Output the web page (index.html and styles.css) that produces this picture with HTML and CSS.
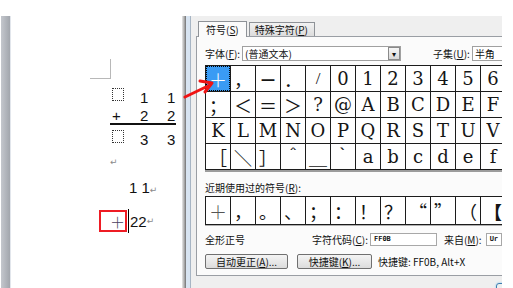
FILE: index.html
```html
<!DOCTYPE html>
<html lang="zh-CN">
<head>
  <meta charset="UTF-8" />
  <title>符号</title>
  <link rel="stylesheet" href="styles.css">
</head>
<body>
  <div class="screen">
    <div class="top-gap"></div>
    <div class="main">
      <div class="gutter"></div>

      <!-- Word page -->
      <div class="page">
        <div class="crop-mark"></div>
        <div class="math">
          <div class="mrow"><span class="mcell"><i class="ph"></i></span><span class="mcell">1</span><span class="mcell">1</span></div>
          <div class="mrow under"><span class="mcell">+</span><span class="mcell">2</span><span class="mcell">2</span></div>
          <div class="mrow last"><span class="mcell"><i class="ph"></i></span><span class="mcell">3</span><span class="mcell">3</span></div>
        </div>
        <div class="para-empty"><span class="pm">↵</span></div>
        <div class="line-11">1 1<span class="pm">↵</span></div>
        <div class="line-plus">
          <span class="red-box">＋</span><span class="caret"></span><span>22</span><span class="pm">↵</span>
        </div>
      </div>
      <div class="page-shadow"></div>
      <div class="frame"></div>

      <!-- Symbol dialog -->
      <div class="dialog">
        <div class="tabs">
          <div class="tab active">符号(<u>S</u>)</div>
          <div class="tab">特殊字符(<u>P</u>)</div>
        </div>
        <div class="panel">
          <div class="font-row">
            <span class="lbl">字体(<u>F</u>):</span>
            <div class="combo"><span>(普通文本)</span><span class="drop">▾</span></div>
            <span class="lbl subset">子集(<u>U</u>):</span>
            <div class="combo small"><span>半角</span></div>
          </div>

          <div class="grid-wrap">
            <div class="sym-grid">
              <div class="cell c hl">＋</div><div class="cell c">，</div><div class="cell c dash">－</div><div class="cell c">．</div><div class="cell thin">/</div><div class="cell">0</div><div class="cell">1</div><div class="cell">2</div><div class="cell">3</div><div class="cell">4</div><div class="cell">5</div><div class="cell">6</div>
              <div class="cell c">；</div><div class="cell c">＜</div><div class="cell c">＝</div><div class="cell c">＞</div><div class="cell">?</div><div class="cell">@</div><div class="cell">A</div><div class="cell">B</div><div class="cell">C</div><div class="cell">D</div><div class="cell">E</div><div class="cell">F</div>
              <div class="cell">K</div><div class="cell">L</div><div class="cell">M</div><div class="cell">N</div><div class="cell">O</div><div class="cell">P</div><div class="cell">Q</div><div class="cell">R</div><div class="cell">S</div><div class="cell">T</div><div class="cell">U</div><div class="cell">V</div>
              <div class="cell c">［</div><div class="cell c">＼</div><div class="cell c">］</div><div class="cell c">＾</div><div class="cell c">＿</div><div class="cell c">｀</div><div class="cell">a</div><div class="cell">b</div><div class="cell">c</div><div class="cell">d</div><div class="cell">e</div><div class="cell">f</div>
            </div>
          </div>

          <div class="recent-label">近期使用过的符号(<u>R</u>):</div>
          <div class="grid-wrap recent-wrap">
            <div class="recent">
              <div class="cell c plus">＋</div><div class="cell c">，</div><div class="cell c">。</div><div class="cell c">、</div><div class="cell c">；</div><div class="cell c">：</div><div class="cell c">！</div><div class="cell c">？</div><div class="cell c">“</div><div class="cell c">”</div><div class="cell c">（</div><div class="cell c bold">【</div>
            </div>
          </div>

          <div class="code-row">
            <span class="glyph-name">全形正号</span>
            <span class="lbl">字符代码(<u>C</u>):</span>
            <div class="field">FF0B</div>
            <span class="lbl from">来自(<u>M</u>):</span>
            <div class="field short">Ur</div>
          </div>

          <div class="btn-row">
            <button class="btn wide">自动更正(<u>A</u>)...</button>
            <button class="btn">快捷键(<u>K</u>)...</button>
            <span class="lbl shortcut">快捷键: FF0B, Alt+X</span>
          </div>
        </div>
        <div class="dialog-foot"><span class="default-btn"></span></div>
      </div>
    </div>

    <!-- red pointer drawn over the screenshot -->
    <svg class="arrow" width="34" height="24" viewBox="0 0 34 24">
      <path d="M2 20 L27 8" stroke="#f01414" stroke-width="3" stroke-linecap="round" fill="none"/>
      <path d="M17 4 L29 6 L22 15" stroke="#f01414" stroke-width="3" stroke-linecap="round" stroke-linejoin="round" fill="none"/>
    </svg>
  </div>
</body>
</html>
```

FILE: styles.css
```css
html, body {
  margin: 0;
  padding: 0;
  background: #fff;
}
.screen {
  position: relative;
  width: 513px;
  height: 288px;
  overflow: hidden;
  font-family: "Noto Sans CJK SC", sans-serif;
}
.top-gap {
  height: 16px;
}
.main {
  display: flex;
  height: 272px;
}

/* left grey ruler strip */
.gutter {
  width: 9px;
  margin-left: 1px;
  background: linear-gradient(to right, #c4c7cd, #a2a6ad);
  border-right: 1px solid #e2e6ec;
}

/* document page */
.page {
  width: 171px;
  background: #fff;
  font-family: "Liberation Sans", Arial, sans-serif;
  color: #111;
}
.crop-mark {
  width: 20px;
  height: 19px;
  margin: 43px 0 0 79px;
  border-right: 1px solid #b8b8b8;
  border-bottom: 1px solid #b8b8b8;
}
.math {
  margin: 8px 0 0 99px;
  width: 66px;
  font-size: 15px;
}
.mrow {
  display: flex;
  align-items: center;
  height: 20px;
}
.mrow.under {
  height: 15px;
  align-items: flex-end;
  line-height: 12px;
  padding-bottom: 1px;
  border-bottom: 2px solid #111;
}
.mrow.last {
  margin-top: 4px;
}
.mcell {
  display: flex;
  align-items: center;
}
.mcell:nth-child(1) { width: 30px; padding-left: 2px; box-sizing: border-box; }
.mcell:nth-child(2) { width: 27px; }
.mcell:nth-child(3) { width: 9px; }
.ph {
  display: block;
  width: 10px;
  height: 11px;
  border: 1px dotted #333;
  margin-bottom: 5px;
}
.pm {
  font-size: 9px;
  color: #8a8a8a;
  font-family: "DejaVu Sans", sans-serif;
}
.para-empty {
  margin: 5px 0 0 99px;
  height: 12px;
  line-height: 12px;
}
.line-11 {
  margin: 14px 0 0 118px;
  font-size: 15px;
  line-height: 16px;
}
.line-plus {
  display: flex;
  align-items: center;
  margin: 11px 0 0 88px;
  font-size: 15px;
  height: 24px;
}
.red-box {
  display: flex;
  align-items: center;
  justify-content: flex-end;
  width: 24px;
  height: 18px;
  border: 2px solid #ee1c24;
  font-family: "Noto Sans CJK SC", sans-serif;
  font-size: 15px;
  color: #4a4060;
  font-weight: 300;
}
.caret {
  width: 1px;
  height: 24px;
  background: #000;
  margin: 0 1px 0 1px;
}

.page-shadow {
  width: 4px;
  background: linear-gradient(to right, #e8e8e8, #a8a8a8 60%, #707070);
}
.frame {
  width: 4px;
  background: #d8e4f1;
  border-right: 1px solid #a7b5c4;
}

/* dialog */
.dialog {
  width: 311px;
  background: #efefef;
  overflow: hidden;
  color: #111;
  font-size: 10px;
}
.tabs {
  display: flex;
  align-items: flex-end;
  height: 20px;
  padding-left: 7px;
}
.tab {
  height: 13px;
  line-height: 13px;
  padding: 0 6px 0 5px;
  margin-right: 2px;
  border: 1px solid #8e9297;
  border-bottom: none;
  background: linear-gradient(#f2f2f2, #dcdcdc);
  white-space: nowrap;
}
.tab.active {
  height: 15px;
  line-height: 15px;
  background: #fbfbfb;
  margin-bottom: -1px;
  position: relative;
  padding: 0 7px;
}
.panel {
  margin-left: 5px;
  width: 320px;
  height: 240px;
  background: #fbfbfb;
  border-top: 1px solid #9a9ea4;
  border-left: 1px solid #9a9ea4;
  border-bottom: 1px solid #9a9ea4;
  padding-left: 8px;
  box-sizing: border-box;
}
.font-row {
  display: flex;
  align-items: center;
  height: 14px;
  margin-top: 9px;
  white-space: nowrap;
}
.lbl {
  white-space: nowrap;
}
.combo {
  display: flex;
  align-items: center;
  justify-content: space-between;
  width: 157px;
  height: 13px;
  margin-left: 2px;
  border: 1px solid #a0a0a0;
  background: #fff;
  box-sizing: content-box;
}
.combo span:first-child {
  padding-left: 2px;
}
.drop {
  width: 10px;
  height: 11px;
  line-height: 11px;
  text-align: center;
  font-size: 8px;
  border: 1px solid #8a8a8a;
  background: linear-gradient(#f6f6f6, #d8d8d8);
  margin-right: 0;
}
.subset {
  margin-left: 32px;
}
.combo.small {
  width: 40px;
}

.grid-wrap {
  margin-top: 5px;
  width: 302px;
  border-bottom: 2px solid #9c9c9c;
}
.sym-grid, .recent {
  display: grid;
  grid-template-columns: repeat(12, 24px);
  gap: 1px;
  background: #1c1c1c;
  border: 1px solid #1c1c1c;
}
.sym-grid {
  grid-template-rows: 25px 25px 25px 25px;
  row-gap: 1px;
}
.sym-grid .cell:nth-child(-n+12) {
  height: 25px;
  margin-bottom: 1px;
}
.cell {
  display: flex;
  align-items: center;
  justify-content: center;
  background: #fff;
  font-family: "DejaVu Serif", "Liberation Serif", serif;
  font-size: 18px;
  color: #151515;
}
.cell.c {
  font-family: "Noto Sans CJK SC", sans-serif;
  font-size: 18px;
}
.cell.thin {
  font-family: "Liberation Serif", serif;
  font-size: 17px;
}
.cell.dash {
  font-weight: bold;
}
.cell.hl {
  background: #3a9bf4;
  color: #fff;
  outline: 1px dotted #000;
  outline-offset: -1px;
  font-weight: 300;
}
.recent-label {
  margin-top: 10px;
  height: 12px;
  line-height: 12px;
  white-space: nowrap;
}
.recent-wrap {
  margin-top: 2px;
  border-bottom: 1px solid #b0b0b0;
}
.recent {
  grid-template-rows: 27px;
}
.recent .cell.plus {
  color: #555;
  font-weight: 300;
}
.recent .cell.bold {
  font-weight: 900;
}

.code-row {
  display: flex;
  align-items: center;
  margin-top: 7px;
  height: 13px;
  white-space: nowrap;
}
.glyph-name {
  width: 107px;
}
.field {
  width: 62px;
  height: 11px;
  line-height: 11px;
  margin-left: 2px;
  padding-left: 3px;
  border: 1px solid #a8a8a8;
  background: #fff;
  font-family: "DejaVu Sans Mono", monospace;
  font-size: 7px;
  font-weight: bold;
}
.from {
  margin-left: 7px;
}
.field.short {
  width: 11px;
  margin-left: 4px;
}

.btn-row {
  display: flex;
  align-items: center;
  margin-top: 8px;
  height: 15px;
  white-space: nowrap;
}
.btn {
  height: 15px;
  padding: 0;
  border: 1px solid #707070;
  border-radius: 2px;
  background: linear-gradient(#f4f4f4, #dcdcdc);
  font-family: "Noto Sans CJK SC", sans-serif;
  font-size: 10px;
  line-height: 13px;
  color: #111;
  width: 75px;
}
.btn.wide {
  width: 83px;
  margin-right: 9px;
}
.shortcut {
  margin-left: 6px;
}
.dialog-foot {
  height: 11px;
  padding-left: 305px;
}
.default-btn {
  display: block;
  width: 20px;
  height: 10px;
  margin-top: 7px;
  border: 1px solid #3c7fb1;
  border-radius: 3px;
  box-shadow: 0 0 2px #7fc4ee;
}

/* annotation arrow over the dialog edge */
.arrow {
  position: absolute;
  left: 183px;
  top: 77px;
}
```
